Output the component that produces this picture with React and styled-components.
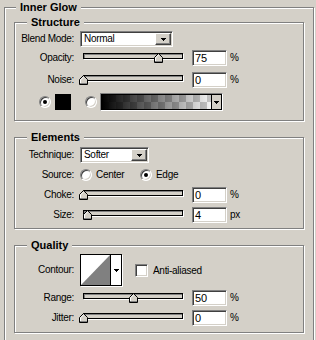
import React from 'react';
import styled, { createGlobalStyle } from 'styled-components';

const Global = createGlobalStyle`
  html, body { margin: 0; padding: 0; background: #d4d0c8; overflow: hidden; }
  body {
    font-family: "Liberation Sans", Arial, sans-serif;
    font-size: 10px;
    letter-spacing: -0.3px;
    color: #000;
  }
`;

const Page = styled.div`
  width: 316px;
  height: 340px;
  box-sizing: border-box;
  padding: 7px 2px 0 4px;
  overflow: hidden;
`;

const Group = styled.div`
  box-sizing: border-box;
  display: flex;
  flex-direction: column;
  border: 1px solid #808080;
  box-shadow: inset 1px 1px 0 #fff, 1px 1px 0 #fff;
  padding: ${(p) => p.$pad};
  margin-top: ${(p) => p.$mt || 0}px;
`;

const Legend = styled.div`
  align-self: flex-start;
  margin: -7px 0 0 ${(p) => p.$indent}px;
  padding: 0 4px;
  height: 13px;
  line-height: 13px;
  background: #d4d0c8;
  font-family: "Liberation Sans", Arial, sans-serif;
  font-weight: bold;
  font-size: 11px;
  letter-spacing: 0;
  white-space: nowrap;
`;

const Row = styled.div`
  display: flex;
  align-items: ${(p) => p.$align || 'center'};
  height: ${(p) => p.$h}px;
  margin-top: ${(p) => p.$mt}px;
`;

const Label = styled.span`
  flex: none;
  width: 59px;
  text-align: right;
  white-space: nowrap;
  line-height: ${(p) => p.$lh || 16}px;
`;

const Track = styled.div`
  position: relative;
  flex: none;
  box-sizing: border-box;
  width: 100px;
  height: 6px;
  margin: 3px 0 0 9px;
  border: 1px solid #000;
  background: #d4d0c8;
  box-shadow: inset 1px 1px 0 #808080, 1px 1px 0 #fff;
`;

const ThumbSvg = styled.svg`
  position: absolute;
  top: -1px;
  display: block;
`;

const Field = styled.div`
  flex: none;
  box-sizing: border-box;
  width: 35px;
  height: 16px;
  margin-left: 9px;
  padding: 0 1px 0 2px;
  background: #fff;
  border: 1px solid;
  border-color: #808080 #fff #fff #808080;
  box-shadow: inset 1px 1px 0 #404040, inset -1px -1px 0 #d4d0c8;
  line-height: 14px;
  font-size: 11px;
  letter-spacing: 0;
  white-space: nowrap;
`;

const Unit = styled.span`
  margin-left: 3px;
  line-height: 16px;
`;

const Select = styled.div`
  flex: none;
  display: flex;
  align-items: stretch;
  box-sizing: border-box;
  width: ${(p) => p.$w}px;
  height: 16px;
  margin-left: 6px;
  padding: 1px;
  background: #fff;
  border: 1px solid;
  border-color: #808080 #fff #fff #808080;
  box-shadow: inset 1px 1px 0 #404040, inset -1px -1px 0 #d4d0c8;
`;

const SelectText = styled.span`
  flex: 1;
  padding-left: 2px;
  line-height: 12px;
  white-space: nowrap;
`;

const DropButton = styled.div`
  flex: none;
  box-sizing: border-box;
  width: 16px;
  display: flex;
  align-items: center;
  justify-content: center;
  background: #d4d0c8;
  border: 1px solid;
  border-color: #fff #404040 #404040 #fff;
  box-shadow: inset -1px -1px 0 #808080;
`;

const Radio = styled.span`
  flex: none;
  position: relative;
  box-sizing: border-box;
  width: 12px;
  height: 12px;
  margin-left: ${(p) => p.$ml || 0}px;
  border-radius: 50%;
  background: #fff;
  border: 1px solid;
  border-color: #808080 #fff #fff #808080;
  box-shadow: inset 1px 1px 0 #404040, inset -1px -1px 0 #d4d0c8;
  &::after {
    content: '';
    display: ${(p) => (p.$checked ? 'block' : 'none')};
    position: absolute;
    left: 3px;
    top: 3px;
    width: 4px;
    height: 4px;
    border-radius: 50%;
    background: #000;
  }
`;

const Swatch = styled.span`
  flex: none;
  width: 16px;
  height: 16px;
  margin-left: 4px;
  background: #000;
`;

const GradientPicker = styled.div`
  flex: none;
  display: flex;
  box-sizing: border-box;
  width: 123px;
  height: 18px;
  margin-left: 3px;
  border: 1px solid;
  border-color: #808080 #fff #fff #808080;
  box-shadow: inset 0 0 0 1px #000;
  padding: 1px;
`;

const GradientBar = styled.div`
  flex: 1;
  background:
    linear-gradient(to right, #000 0%, rgba(0, 0, 0, 0) 100%),
    repeating-conic-gradient(#c4c4c4 0 25%, #f4f4f4 0 50%) 0 0 / 14px 14px;
`;

const GradientArrow = styled.div`
  flex: none;
  width: 9px;
  display: flex;
  align-items: center;
  justify-content: center;
  border-left: 1px solid #000;
  background: #d4d0c8;
`;

const Option = styled.span`
  flex: none;
  display: flex;
  align-items: center;
  width: ${(p) => p.$w || 'auto'};
  margin-left: ${(p) => p.$ml || 0}px;
  line-height: 16px;
`;

const OptionText = styled.span`
  margin-left: 4px;
  white-space: nowrap;
`;

const ContourBox = styled.div`
  flex: none;
  display: flex;
  box-sizing: border-box;
  width: 42px;
  height: 32px;
  margin-left: 6px;
  border: 1px solid #000;
  box-shadow: 1px 1px 0 #fff;
  background: #fff;
`;

const ContourArrow = styled.div`
  flex: 1;
  display: flex;
  align-items: center;
  justify-content: center;
  border-left: 1px solid #000;
`;

const Checkbox = styled.span`
  flex: none;
  box-sizing: border-box;
  width: 13px;
  height: 13px;
  margin-left: 13px;
  background: #fff;
  border: 1px solid;
  border-color: #808080 #fff #fff #808080;
  box-shadow: inset 1px 1px 0 #404040, inset -1px -1px 0 #d4d0c8;
`;

const CheckText = styled.span`
  margin-left: 5px;
  white-space: nowrap;
`;

const Arrow = () => (
  <svg width="5" height="3" viewBox="0 0 5 3" style={{ display: 'block' }}>
    <path d="M0 0h5v1h-1v1h-1v1h-1v-1h-1v-1h-1z" fill="#000" />
  </svg>
);

const Thumb = ({ pos }) => (
  <ThumbSvg width="9" height="10" viewBox="0 0 9 10" style={{ left: pos - 5 }}>
    <path d="M4.5 0.5 L8.5 4.5 V9.5 H0.5 V4.5 Z" fill="#d4d0c8" stroke="#000" strokeWidth="1" />
    <path d="M1.5 8.5 V4.9 L4.5 1.9" fill="none" stroke="#fff" strokeWidth="1" />
    <path d="M1 8.5 H8" stroke="#808080" strokeWidth="1" />
  </ThumbSvg>
);

const SliderRow = ({ label, value, pos, unit, mt }) => (
  <Row $h={16} $mt={mt} $align="flex-start">
    <Label>{label}</Label>
    <Track>
      <Thumb pos={pos} />
    </Track>
    <Field>{value}</Field>
    <Unit>{unit}</Unit>
  </Row>
);

const SelectRow = ({ label, value, w, mt }) => (
  <Row $h={16} $mt={mt}>
    <Label>{label}</Label>
    <Select $w={w}>
      <SelectText>{value}</SelectText>
      <DropButton>
        <Arrow />
      </DropButton>
    </Select>
  </Row>
);

export default function App() {
  return (
    <Page>
      <Global />
      <Group $pad="0 9px 30px 9px">
        <Legend $indent={2}>Inner Glow</Legend>

        <Group $pad="0 0 9px 0" $mt={8}>
          <Legend $indent={12}>Structure</Legend>
          <SelectRow label="Blend Mode:" value="Normal" w={93} mt={2} />
          <SliderRow label="Opacity:" value="75" pos={75} unit="%" mt={3} />
          <SliderRow label="Noise:" value="0" pos={0} unit="%" mt={6} />
          <Row $h={18} $mt={5}>
            <Radio $ml={24} $checked />
            <Swatch />
            <Radio $ml={14} />
            <GradientPicker>
              <GradientBar />
              <GradientArrow>
                <Arrow />
              </GradientArrow>
            </GradientPicker>
          </Row>
        </Group>

        <Group $pad="0 0 5px 0" $mt={16}>
          <Legend $indent={12}>Elements</Legend>
          <SelectRow label="Technique:" value="Softer" w={69} mt={3} />
          <Row $h={16} $mt={4}>
            <Label>Source:</Label>
            <Option $ml={6} $w="60px">
              <Radio />
              <OptionText>Center</OptionText>
            </Option>
            <Option>
              <Radio $checked />
              <OptionText>Edge</OptionText>
            </Option>
          </Row>
          <SliderRow label="Choke:" value="0" pos={0} unit="%" mt={4} />
          <SliderRow label="Size:" value="4" pos={4} unit="px" mt={4} />
        </Group>

        <Group $pad="0 0 6px 0" $mt={16}>
          <Legend $indent={12}>Quality</Legend>
          <Row $h={32} $mt={2}>
            <Label>Contour:</Label>
            <ContourBox>
              <svg width="29" height="30" viewBox="0 0 29 30" style={{ display: 'block', flex: 'none' }}>
                <rect width="29" height="30" fill="#fff" />
                <polygon points="0,30 29,0 29,30" fill="#808080" />
              </svg>
              <ContourArrow>
                <Arrow />
              </ContourArrow>
            </ContourBox>
            <Checkbox />
            <CheckText>Anti-aliased</CheckText>
          </Row>
          <SliderRow label="Range:" value="50" pos={50} unit="%" mt={4} />
          <SliderRow label="Jitter:" value="0" pos={0} unit="%" mt={4} />
        </Group>
      </Group>
    </Page>
  );
}
